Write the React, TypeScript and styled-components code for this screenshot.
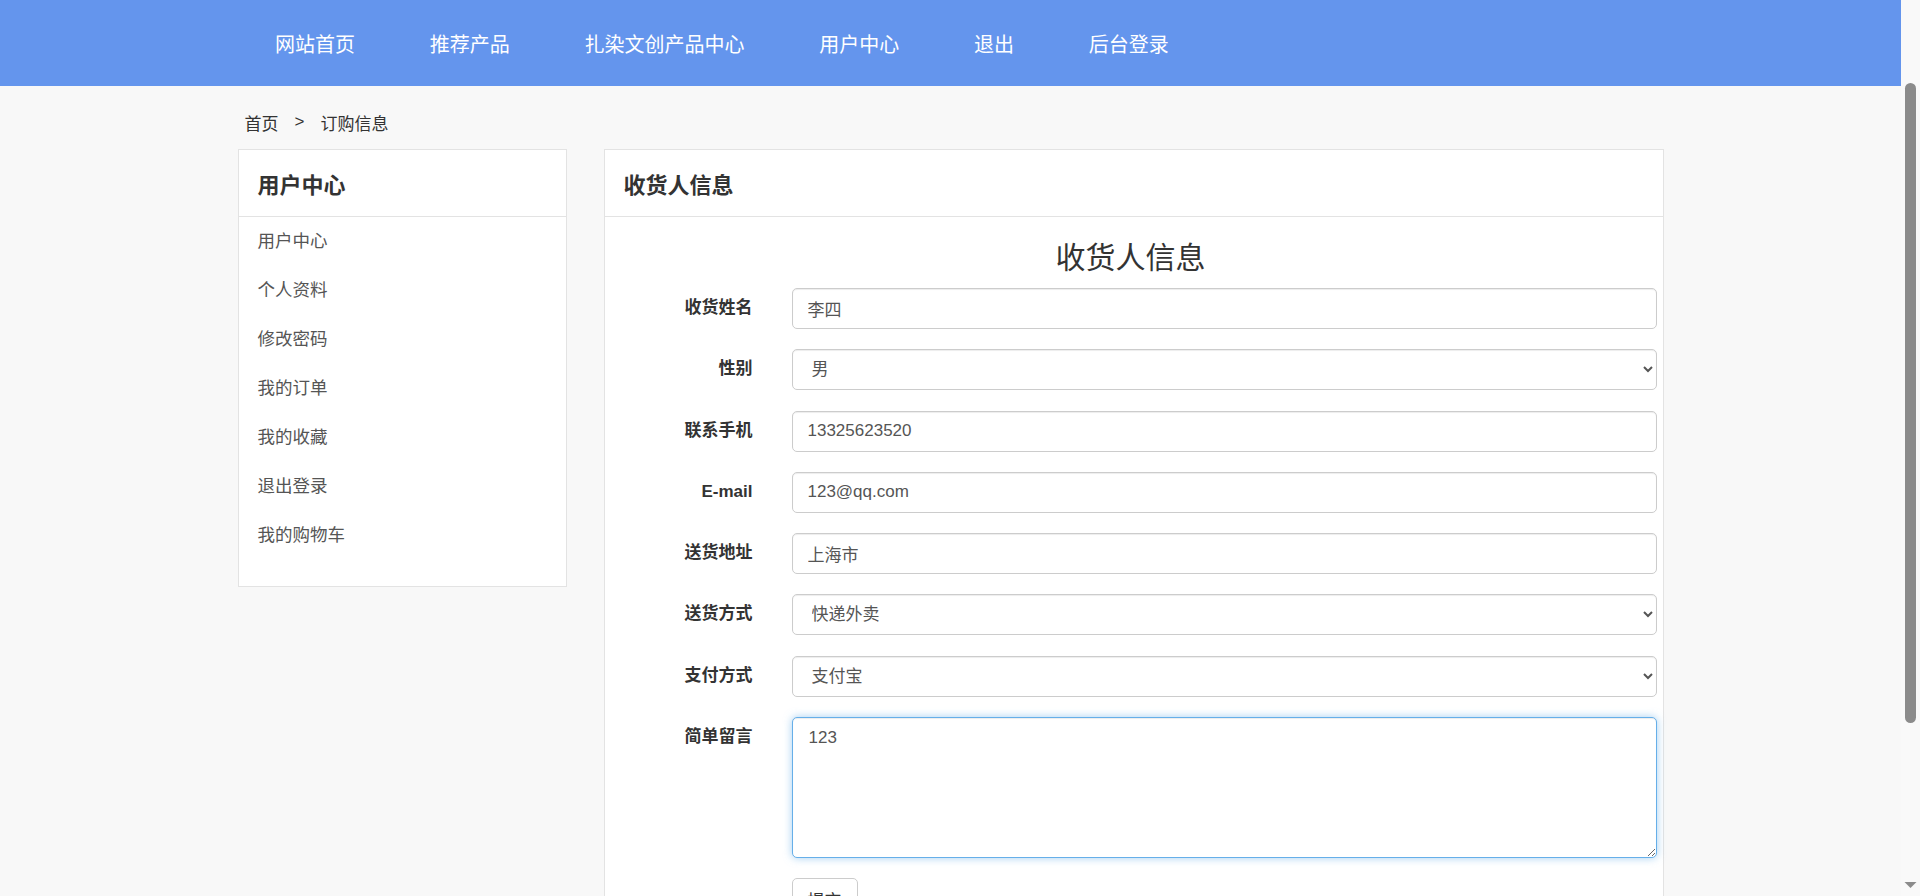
import React from "react";
import styled, { createGlobalStyle } from "styled-components";

const GlobalStyle = createGlobalStyle`
    html, body {
        margin: 0;
        padding: 0;
        background-color: #f8f8f8;
        font-family: "Liberation Sans", "Noto Sans CJK SC", sans-serif;
        color: #333;
    }

    * {
        box-sizing: border-box;
    }
`;

const navItems = ["网站首页", "推荐产品", "扎染文创产品中心", "用户中心", "退出", "后台登录"];
const menuItems = ["用户中心", "个人资料", "修改密码", "我的订单", "我的收藏", "退出登录", "我的购物车"];

const App = () => {
    return (
        <StyledPage>
            <GlobalStyle />
            <StyledHeader>
                <StyledNav>
                    {navItems.map((item) => (
                        <StyledNavLink key={item}>{item}</StyledNavLink>
                    ))}
                </StyledNav>
            </StyledHeader>

            <StyledMain>
                <StyledBreadcrumb>
                    <span>首页</span>
                    <StyledCrumbSep>&gt;</StyledCrumbSep>
                    <span>订购信息</span>
                </StyledBreadcrumb>

                <StyledRow>
                    <StyledSidebar>
                        <StyledPanelHead>用户中心</StyledPanelHead>
                        <StyledMenu>
                            {menuItems.map((item) => (
                                <StyledMenuItem key={item}>{item}</StyledMenuItem>
                            ))}
                        </StyledMenu>
                    </StyledSidebar>

                    <StyledContent>
                        <StyledPanelHead>收货人信息</StyledPanelHead>
                        <StyledPanelBody>
                            <StyledFormTitle>收货人信息</StyledFormTitle>

                            <StyledFormRow>
                                <StyledLabel>收货姓名</StyledLabel>
                                <StyledInput type="text" defaultValue="李四" />
                            </StyledFormRow>
                            <StyledFormRow>
                                <StyledLabel>性别</StyledLabel>
                                <StyledSelect defaultValue="男">
                                    <option>男</option>
                                    <option>女</option>
                                </StyledSelect>
                            </StyledFormRow>
                            <StyledFormRow>
                                <StyledLabel>联系手机</StyledLabel>
                                <StyledInput type="text" defaultValue="13325623520" />
                            </StyledFormRow>
                            <StyledFormRow>
                                <StyledLabel>E-mail</StyledLabel>
                                <StyledInput type="text" defaultValue="123@qq.com" />
                            </StyledFormRow>
                            <StyledFormRow>
                                <StyledLabel>送货地址</StyledLabel>
                                <StyledInput type="text" defaultValue="上海市" />
                            </StyledFormRow>
                            <StyledFormRow>
                                <StyledLabel>送货方式</StyledLabel>
                                <StyledSelect defaultValue="快递外卖">
                                    <option>快递外卖</option>
                                    <option>到店自取</option>
                                </StyledSelect>
                            </StyledFormRow>
                            <StyledFormRow>
                                <StyledLabel>支付方式</StyledLabel>
                                <StyledSelect defaultValue="支付宝">
                                    <option>支付宝</option>
                                    <option>微信支付</option>
                                </StyledSelect>
                            </StyledFormRow>
                            <StyledFormRow>
                                <StyledLabel>简单留言</StyledLabel>
                                <StyledTextarea defaultValue="123" />
                            </StyledFormRow>
                            <StyledFormRow>
                                <span></span>
                                <div>
                                    <StyledSubmitBtn type="button">提交</StyledSubmitBtn>
                                </div>
                            </StyledFormRow>
                        </StyledPanelBody>
                    </StyledContent>
                </StyledRow>
            </StyledMain>

            {/* the window's scrollbar, drawn since the headless browser hides it */}
            <StyledScrollTrack>
                <StyledScrollThumb />
                <StyledScrollArrow viewBox="0 0 12 6">
                    <path d="M0 0 L12 0 L6 6 Z" fill="#8b8b8b" />
                </StyledScrollArrow>
            </StyledScrollTrack>
        </StyledPage>
    );
};

export default App;

const StyledPage = styled.div`
    padding-right: 19px;
`;

const StyledScrollTrack = styled.div`
    position: fixed;
    top: 0;
    right: 0;
    width: 19px;
    height: 100vh;
    background-color: #f9f9f9;
`;

const StyledScrollThumb = styled.div`
    position: absolute;
    top: 83px;
    left: 4px;
    width: 11px;
    height: 640px;
    border-radius: 6px;
    background-color: #8b8b8b;
`;

const StyledScrollArrow = styled.svg`
    position: absolute;
    left: 3px;
    bottom: 8px;
    width: 13px;
    height: 6px;
`;

const StyledHeader = styled.header`
    height: 86px;
    background-color: #6495ed;
`;

const StyledNav = styled.nav`
    width: 1426px;
    margin: 0 auto;
    display: flex;
    height: 100%;
`;

const StyledNavLink = styled.a`
    padding: 4px 37.4px 0;
    font-size: 20px;
    line-height: 82px;
    color: #fff;
    cursor: pointer;
`;

const StyledMain = styled.main`
    width: 1426px;
    margin: 0 auto;
    padding-bottom: 260px;
`;

const StyledBreadcrumb = styled.div`
    display: flex;
    align-items: center;
    height: 24px;
    margin: 24px 0 15px;
    padding-left: 7px;
    font-size: 17px;
    color: #333;
`;

const StyledCrumbSep = styled.span`
    margin: 0 16px;
`;

const StyledRow = styled.div`
    display: flex;
    align-items: flex-start;
    gap: 37px;
`;

const StyledPanel = styled.section`
    background-color: #fff;
    border: 1px solid #e3e3e3;
`;

const StyledSidebar = styled(StyledPanel)`
    width: 329px;
    flex-shrink: 0;
`;

const StyledContent = styled(StyledPanel)`
    flex: 1;
`;

const StyledPanelHead = styled.h2`
    margin: 0;
    height: 67px;
    display: flex;
    align-items: center;
    padding: 0 0 0 19px;
    border-bottom: 1px solid #e3e3e3;
    font-size: 22px;
    font-weight: bold;
    color: #333;
`;

const StyledMenu = styled.ul`
    list-style: none;
    margin: 0;
    padding: 0 0 26px;
`;

const StyledMenuItem = styled.li`
    height: 49px;
    line-height: 49px;
    padding-left: 19px;
    font-size: 17.5px;
    color: #555;
    cursor: pointer;
`;

const StyledPanelBody = styled.div`
    padding: 24px 6px 40px 0;
`;

const StyledFormTitle = styled.h3`
    margin: 0 0 14px;
    line-height: 33px;
    text-align: center;
    font-size: 30px;
    font-weight: normal;
    color: #333;
`;

const StyledFormRow = styled.div`
    display: grid;
    grid-template-columns: 148px 1fr;
    column-gap: 39px;
    margin-bottom: 20.3px;
`;

const StyledLabel = styled.label`
    padding-top: 8px;
    line-height: 24px;
    text-align: right;
    font-size: 17px;
    font-weight: bold;
    color: #333;
`;

const StyledInput = styled.input`
    width: 100%;
    height: 41px;
    padding: 0 15px;
    border: 1px solid #ccc;
    border-radius: 5px;
    box-shadow: inset 0 1px 1px rgba(0, 0, 0, 0.075);
    font-family: inherit;
    font-size: 17px;
    color: #555;
    background-color: #fff;
    outline: none;
`;

const StyledSelect = styled.select`
    width: 100%;
    height: 41px;
    padding: 0 20px 0 15px;
    border: 1px solid #ccc;
    border-radius: 5px;
    box-shadow: inset 0 1px 1px rgba(0, 0, 0, 0.075);
    font-family: inherit;
    font-size: 17px;
    color: #555;
    background-color: #fff;
    outline: none;
`;

const StyledTextarea = styled.textarea`
    width: 100%;
    height: 141px;
    padding: 8px 16px;
    border: 1px solid #66afe9;
    border-radius: 5px;
    box-shadow: inset 0 1px 1px rgba(0, 0, 0, 0.075), 0 0 8px rgba(102, 175, 233, 0.6);
    font-family: inherit;
    font-size: 17px;
    line-height: 24px;
    color: #555;
    background-color: #fff;
    outline: none;
    resize: vertical;
`;

const StyledSubmitBtn = styled.button`
    height: 42px;
    padding: 0 15px;
    border: 1px solid #ccc;
    border-radius: 5px;
    background-color: #fff;
    font-family: inherit;
    font-size: 17px;
    color: #333;
    cursor: pointer;
`;
